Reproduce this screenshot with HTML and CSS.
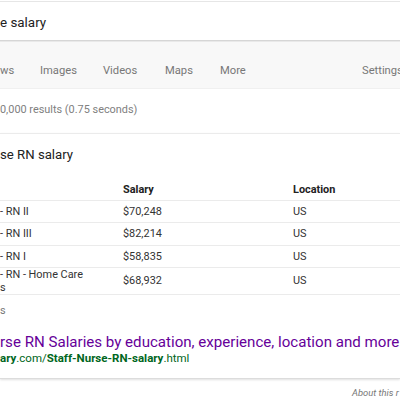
FILE: index.html
```html
<!DOCTYPE html>
<html>
<head>
<meta charset="utf-8">
<link rel="stylesheet" href="styles.css">
</head>
<body>
<div class="page">
  <div class="search">e salary</div>
  <div class="tabs">
    <span class="tab t-news">ws</span>
    <span class="tab t-images">Images</span>
    <span class="tab t-videos">Videos</span>
    <span class="tab t-maps">Maps</span>
    <span class="tab t-more">More</span>
    <span class="tab t-settings">Settings</span>
  </div>
  <div class="stats">0,000 results (0.75 seconds)</div>
  <div class="card">
    <div class="heading">se RN salary</div>
    <table class="tbl">
      <tr class="hdr"><th class="c1"></th><th class="c2">Salary</th><th class="c3">Location</th></tr>
      <tr class="r1"><td>- RN II</td><td>$70,248</td><td>US</td></tr>
      <tr class="r2"><td>- RN III</td><td>$82,214</td><td>US</td></tr>
      <tr class="r3"><td>- RN I</td><td>$58,835</td><td>US</td></tr>
      <tr class="r4"><td>- RN - Home Care<br>s</td><td>$68,932</td><td>US</td></tr>
    </table>
    <div class="more">s</div>
    <div class="title">rse RN Salaries by education, experience, location and more</div>
    <div class="url"><b>ary</b>.com/<b>Staff-Nurse-RN-salary</b>.html</div>
  </div>
  <div class="about">About this r</div>
</div>
</body>
</html>
```
FILE: styles.css
```css
html, body {
  margin: 0;
  padding: 0;
  background: #fff;
}
body {
  width: 400px;
  height: 400px;
  overflow: hidden;
  font-family: Roboto, Arial, sans-serif;
  color: #222;
}
.page {
  width: 400px;
}
.search {
  margin-top: 1px;
  border-top: 1px solid #e6e6e6;
  height: 39px;
  box-sizing: border-box;
  padding-top: 12px;
  font-size: 13.4px;
  line-height: 18px;
  color: #222;
  white-space: nowrap;
}
.tabs {
  border-top: 1px solid #d6d6d6;
  box-shadow: inset 0 1px 0 #e9e9e9;
  background: #f8f8f8;
  height: 49px;
  box-sizing: border-box;
  padding-top: 22px;
  display: flex;
  font-size: 11.2px;
  line-height: 16px;
  color: #777;
  white-space: nowrap;
  border-bottom: 1px solid #f0f0f0;
  overflow: hidden;
}
.tab { display: block; flex-shrink: 0; }
.t-news { width: 40px; }
.t-images { width: 63px; }
.t-videos { width: 62px; }
.t-maps { width: 55px; }
.t-more { width: 142px; }
.stats {
  height: 44px;
  box-sizing: border-box;
  padding-top: 13px;
  font-size: 10.9px;
  line-height: 16px;
  color: #808080;
  white-space: nowrap;
}
.card {
  border-top: 1px solid #ebebeb;
  border-bottom: 1px solid #dcdcdc;
  box-shadow: 0 1px 2px rgba(0,0,0,0.12);
  padding-top: 12px;
  padding-bottom: 13px;
}
.heading {
  font-size: 13.2px;
  line-height: 18px;
  color: #222;
  white-space: nowrap;
}
.tbl {
  border-collapse: collapse;
  width: 420px;
  font-size: 10.9px;
  line-height: 13px;
  color: #333;
}
.tbl th, .tbl td {
  text-align: left;
  padding: 0;
  border-bottom: 1px solid #ebebeb;
  vertical-align: middle;
}
.tbl th {
  font-weight: bold;
  color: #222;
  height: 36px;
  vertical-align: bottom;
  padding-bottom: 4px;
  box-sizing: border-box;
}
.c1 { width: 123px; }
.c2 { width: 170px; }
.r1 td { height: 21px; }
.r2 td { height: 22px; }
.r3 td { height: 21px; }
.r4 td { height: 26px; }
.more {
  margin-top: 9px;
  font-size: 10.9px;
  line-height: 14px;
  color: #777;
}
.title {
  margin-top: 15px;
  font-size: 15.1px;
  line-height: 18px;
  color: #660099;
  white-space: nowrap;
}
.url {
  font-size: 11.5px;
  line-height: 14px;
  color: #006621;
  white-space: nowrap;
}
.url b { font-weight: bold; }
.about {
  padding-left: 352px;
  padding-top: 8px;
  font-size: 9.4px;
  line-height: 12px;
  font-style: italic;
  color: #777;
  white-space: nowrap;
}
```
